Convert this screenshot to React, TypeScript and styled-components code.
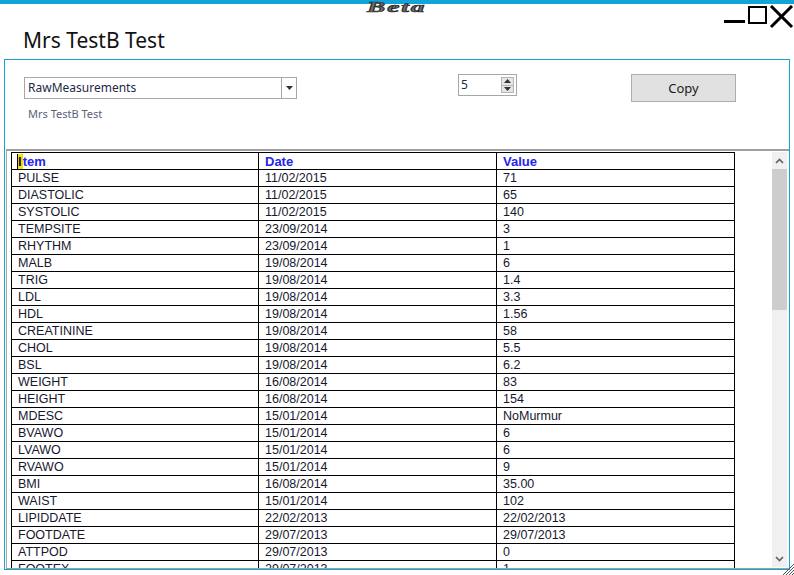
import React from 'react';
import styled, { createGlobalStyle } from 'styled-components';

const GlobalStyle = createGlobalStyle`
  html, body {
    margin: 0;
    padding: 0;
    background: #ffffff;
  }
  body {
    width: 794px;
    height: 575px;
    overflow: hidden;
    font-family: "Liberation Sans", Arial, sans-serif;
  }
`;

const Window = styled.div`
  position: relative;
  width: 794px;
  height: 575px;
  display: flex;
  flex-direction: column;
  overflow: hidden;
  background: #fff;
`;

const AccentBar = styled.div`
  height: 4px;
  flex-shrink: 0;
  background: #12a3d8;
`;

const BetaLogo = styled.div`
  position: absolute;
  top: 1px;
  left: 367px;
  font: italic bold 14px "Liberation Serif", "DejaVu Serif", serif;
  line-height: 14px;
  letter-spacing: 1px;
  color: #6e6e6e;
  -webkit-text-stroke: 0.7px #2b2b2b;
  transform: scaleX(1.95);
  transform-origin: left top;
`;

const TitleRow = styled.div`
  height: 55px;
  flex-shrink: 0;
  display: flex;
  justify-content: space-between;
  align-items: flex-start;
`;

const Title = styled.h1`
  margin: 26px 0 0 23px;
  font: 400 21px "Noto Sans", "Open Sans", sans-serif;
  line-height: 1;
  color: #111;
`;

const Controls = styled.svg`
  margin-top: 1px;
  flex-shrink: 0;
`;

const Panel = styled.div`
  flex: 1;
  min-height: 0;
  margin: 0 4px 5px 4px;
  border: 1px solid #1ba0d4;
  display: flex;
  flex-direction: column;
`;

const Toolbar = styled.div`
  height: 89px;
  flex-shrink: 0;
  box-sizing: border-box;
  padding: 14px 0 0 19px;
  display: flex;
  align-items: flex-start;
`;

const ComboColumn = styled.div`
  display: flex;
  flex-direction: column;
  margin-top: 3px;
`;

const Combo = styled.div`
  width: 273px;
  height: 22px;
  box-sizing: border-box;
  border: 1px solid #a6a6a6;
  display: flex;
`;

const ComboText = styled.div`
  flex: 1;
  padding-left: 3px;
  font: 12px "Noto Sans", "Open Sans", sans-serif;
  line-height: 20px;
  color: #1c2a48;
`;

const ComboButton = styled.div`
  width: 14px;
  border-left: 1px solid #a6a6a6;
  display: flex;
  align-items: center;
  justify-content: center;
`;

const SubLabel = styled.div`
  margin-top: 8px;
  padding-left: 4px;
  font: 11px "Noto Sans", "Open Sans", sans-serif;
  line-height: 14px;
  color: #5b6178;
`;

const Spinner = styled.div`
  margin-left: 161px;
  width: 59px;
  height: 22px;
  box-sizing: border-box;
  border: 1px solid #a6a6a6;
  display: flex;
`;

const SpinValue = styled.div`
  flex: 1;
  padding-left: 2px;
  font: 12px "Noto Sans", "Open Sans", sans-serif;
  line-height: 20px;
  color: #1c2a48;
`;

const SpinButtons = styled.div`
  width: 13px;
  margin: 2px 2px 2px 0;
  display: flex;
  flex-direction: column;
`;

const SpinButton = styled.div`
  flex: 1;
  background: #e6e6e6;
  border: 1px solid #b5b5b5;
  display: flex;
  align-items: center;
  justify-content: center;
  & + & {
    border-top: none;
  }
`;

const CopyButton = styled.button`
  margin-left: 114px;
  width: 105px;
  height: 28px;
  background: #e1e1e1;
  border: 1px solid #adadad;
  font: 13px "Noto Sans", "Open Sans", sans-serif;
  color: #1a1a1a;
  padding: 0;
`;

const GridBox = styled.div`
  flex: 1;
  min-height: 0;
  margin-left: 1px;
  border-top: 2px solid #a0a0a0;
  border-left: 1px solid #a9a9a9;
  border-bottom: 1px solid #a0a0a0;
  display: flex;
`;

const TableArea = styled.div`
  flex: 1;
  overflow: hidden;
  padding: 1px 0 0 4px;
`;

const Table = styled.table`
  border-collapse: collapse;
  table-layout: fixed;
  width: 724px;
`;

const Row = styled.tr`
  height: 17px;
`;

const Cell = styled.td<{ $head?: boolean }>`
  border: 1px solid #000;
  padding: 1px 0 0 6px;
  height: 15px;
  font-size: ${({ $head }) => ($head ? '13px' : '12.5px')};
  font-weight: ${({ $head }) => ($head ? 700 : 400)};
  color: ${({ $head }) => ($head ? '#2424ee' : '#17172e')};
  line-height: 15px;
  white-space: nowrap;
  overflow: hidden;
  vertical-align: middle;
`;

const Caret = styled.span`
  display: inline-block;
  background: #f2e400;
  color: #111;
  border-left: 1px solid #000;
  line-height: 15px;
  padding-right: 1px;
  margin-left: -1px;
`;

const Scrollbar = styled.div`
  width: 15px;
  margin: 1px 2px 1px 0;
  background: #f0f0f0;
  display: flex;
  flex-direction: column;
`;

const ScrollArrow = styled.div`
  height: 17px;
  flex-shrink: 0;
  display: flex;
  align-items: center;
  justify-content: center;
`;

const Thumb = styled.div`
  height: 141px;
  flex-shrink: 0;
  background: #cdcdcd;
`;

const Track = styled.div`
  flex: 1;
`;

const Grip = styled.svg`
  position: absolute;
  right: 0;
  bottom: 0;
`;

const rows: [string, string, string][] = [
  ['PULSE', '11/02/2015', '71'],
  ['DIASTOLIC', '11/02/2015', '65'],
  ['SYSTOLIC', '11/02/2015', '140'],
  ['TEMPSITE', '23/09/2014', '3'],
  ['RHYTHM', '23/09/2014', '1'],
  ['MALB', '19/08/2014', '6'],
  ['TRIG', '19/08/2014', '1.4'],
  ['LDL', '19/08/2014', '3.3'],
  ['HDL', '19/08/2014', '1.56'],
  ['CREATININE', '19/08/2014', '58'],
  ['CHOL', '19/08/2014', '5.5'],
  ['BSL', '19/08/2014', '6.2'],
  ['WEIGHT', '16/08/2014', '83'],
  ['HEIGHT', '16/08/2014', '154'],
  ['MDESC', '15/01/2014', 'NoMurmur'],
  ['BVAWO', '15/01/2014', '6'],
  ['LVAWO', '15/01/2014', '6'],
  ['RVAWO', '15/01/2014', '9'],
  ['BMI', '16/08/2014', '35.00'],
  ['WAIST', '15/01/2014', '102'],
  ['LIPIDDATE', '22/02/2013', '22/02/2013'],
  ['FOOTDATE', '29/07/2013', '29/07/2013'],
  ['ATTPOD', '29/07/2013', '0'],
  ['FOOTEX', '29/07/2013', '1'],
];

const Tri = ({ up }: { up?: boolean }) => (
  <svg width="7" height="4" viewBox="0 0 7 4">
    <path d={up ? 'M0 4 L3.5 0 L7 4 Z' : 'M0 0 L3.5 4 L7 0 Z'} fill="#333" />
  </svg>
);

const Chevron = ({ up }: { up?: boolean }) => (
  <svg width="9" height="6" viewBox="0 0 9 6">
    <path
      d={up ? 'M1 5 L4.5 1.5 L8 5' : 'M1 1 L4.5 4.5 L8 1'}
      fill="none"
      stroke="#606060"
      strokeWidth="1.6"
    />
  </svg>
);

export default function App() {
  return (
    <Window>
      <GlobalStyle />
      <AccentBar />
      <BetaLogo>Beta</BetaLogo>
      <TitleRow>
        <Title>Mrs TestB Test</Title>
        <Controls width="70" height="24" viewBox="0 0 70 24">
          <rect x="0" y="15" width="21" height="3" fill="#000" />
          <rect x="25" y="2" width="17" height="16" fill="none" stroke="#000" strokeWidth="2" />
          <path d="M47 1 L68 22 M68 1 L47 22" stroke="#000" strokeWidth="3" />
        </Controls>
      </TitleRow>

      <Panel>
        <Toolbar>
          <ComboColumn>
            <Combo>
              <ComboText>RawMeasurements</ComboText>
              <ComboButton>
                <Tri />
              </ComboButton>
            </Combo>
            <SubLabel>Mrs TestB Test</SubLabel>
          </ComboColumn>
          <Spinner>
            <SpinValue>5</SpinValue>
            <SpinButtons>
              <SpinButton>
                <Tri up />
              </SpinButton>
              <SpinButton>
                <Tri />
              </SpinButton>
            </SpinButtons>
          </Spinner>
          <CopyButton>Copy</CopyButton>
        </Toolbar>

        <GridBox>
          <TableArea>
            <Table>
              <colgroup>
                <col style={{ width: 247 }} />
                <col style={{ width: 238 }} />
                <col style={{ width: 238 }} />
              </colgroup>
              <tbody>
                <Row>
                  <Cell $head>
                    <Caret>I</Caret>tem
                  </Cell>
                  <Cell $head>Date</Cell>
                  <Cell $head>Value</Cell>
                </Row>
                {rows.map(([item, date, value]) => (
                  <Row key={item}>
                    <Cell>{item}</Cell>
                    <Cell>{date}</Cell>
                    <Cell>{value}</Cell>
                  </Row>
                ))}
              </tbody>
            </Table>
          </TableArea>
          <Scrollbar>
            <ScrollArrow>
              <Chevron up />
            </ScrollArrow>
            <Thumb />
            <Track />
            <ScrollArrow>
              <Chevron />
            </ScrollArrow>
          </Scrollbar>
        </GridBox>
      </Panel>

      <Grip width="12" height="14" viewBox="0 0 12 14">
        <path d="M12 3 L1 14 M12 6 L4 14 M12 9 L7 14 M12 12 L10 14" stroke="#555" strokeWidth="1" />
      </Grip>
    </Window>
  );
}
